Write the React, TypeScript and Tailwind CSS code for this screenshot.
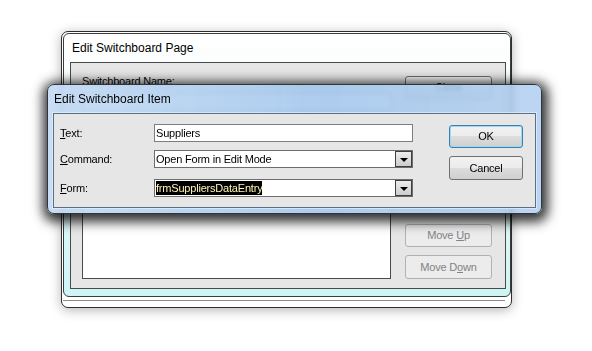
const win7Button =
  "flex items-center justify-center rounded-[3px] border bg-[linear-gradient(180deg,#f2f2f2_0%,#ebebeb_50%,#dddddd_50%,#cfcfcf_100%)]";

const disabledButton =
  "flex items-center justify-center rounded-[3px] border border-[#adb2b5] bg-[#ececec] text-[#838383]";

function Key({ k }: { k: string }) {
  return <span className="underline underline-offset-[1px]">{k}</span>;
}

function DropArrow() {
  return (
    <div className="flex h-full w-[17px] shrink-0 items-center justify-center border border-[#3f3f3f] bg-[linear-gradient(180deg,#ececec,#cdcdcd)]">
      <div className="mt-[2px] h-0 w-0 border-x-[4px] border-t-[4px] border-x-transparent border-t-black" />
    </div>
  );
}

function SwitchboardPage() {
  return (
    <div className="absolute left-[61px] top-[31px] flex h-[277px] w-[451px] flex-col rounded-[7px] border border-[#2e2e2e] bg-white pl-[1px] pt-[1px] shadow-[0_2px_12px_rgba(0,0,0,0.3)]">
      <div className="flex h-[264px] flex-col rounded-[6px] border border-[#3d3d3d] bg-[linear-gradient(180deg,#ffffff_0%,#f0fbfb_40%,#cdf5f5_100%)] pb-[7px] pl-[6px] pr-[4px]">
        <div className="flex h-[28px] items-center pl-[2px] text-[12px] tracking-normal">Edit Switchboard Page</div>
        <div className="flex flex-1 border border-[#4a4a4a] bg-[#e6e6e6] pb-[9px]">
          <div className="ml-[11px] flex w-[309px] flex-col">
            <div className="mt-[10px]">Switchboard Name:</div>
            <div className="mt-[3px] h-[18px] border border-[#7a7a7a] bg-white" />
            <div className="mt-[24px] flex-1 border border-[#4a4a4a] bg-white" />
          </div>
          <div className="ml-[14px] flex w-[87px] flex-col pt-[13px]">
            <div className={`${win7Button} h-[23px] border-[#707070]`}>Close</div>
            <div className="flex-1" />
            <div className={`${disabledButton} h-[23px]`}>
              <span>
                Move <Key k="U" />p
              </span>
            </div>
            <div className={`${disabledButton} mt-[8px] h-[24px]`}>
              <span>
                Move D<Key k="o" />wn
              </span>
            </div>
          </div>
        </div>
      </div>
      <div className="mr-[6px] mt-[3px] border-t border-[#8d8d8d]" />
    </div>
  );
}

function SwitchboardItem() {
  return (
    <div className="absolute left-[47px] top-[84px] flex h-[130px] w-[495px] flex-col overflow-hidden rounded-[7px] border border-[#2d3540] bg-[linear-gradient(90deg,rgba(196,219,244,0.92)_0%,rgba(162,198,236,0.88)_55%,rgba(176,206,240,0.86)_100%)] shadow-[1px_3px_12px_5px_rgba(0,0,0,0.8)] backdrop-blur-[2px]">
      <div className="flex h-[28px] shrink-0 items-center pl-[6px] text-[12px] tracking-normal">Edit Switchboard Item</div>
      <div className="mb-[5px] ml-[5px] mr-[5px] flex flex-1 border border-[#5a6e84] bg-[#e6e6e6] shadow-[0_0_0_1px_rgba(235,245,255,0.6)]">
        <div className="flex flex-col pl-[6px] pt-[10px]">
          <div className="flex h-[18px] items-center">
            <div className="w-[94px]">
              <Key k="T" />ext:
            </div>
            <div className="flex h-full w-[259px] items-center border border-[#7d7d7d] bg-white pl-[1px]">Suppliers</div>
          </div>
          <div className="mt-[8px] flex h-[18px] items-center">
            <div className="w-[94px]">
              <Key k="C" />ommand:
            </div>
            <div className="flex h-full w-[259px] items-center border border-[#6d6d6d] bg-white pl-[1px]">
              <div className="flex-1">Open Form in Edit Mode</div>
              <DropArrow />
            </div>
          </div>
          <div className="mt-[11px] flex h-[18px] items-center">
            <div className="w-[94px]">
              <Key k="F" />orm:
            </div>
            <div className="flex h-full w-[259px] items-center border border-[#6d6d6d] bg-white pl-[1px]">
              <div className="flex h-full flex-1 items-center py-[1px]">
                <span className="flex h-full items-center bg-black text-[#fff6b4]">frmSuppliersDataEntry</span>
              </div>
              <DropArrow />
            </div>
          </div>
        </div>
        <div className="ml-[36px] flex flex-col pt-[11px]">
          <div className={`${win7Button} h-[23px] w-[74px] border-[#3c7fb1] shadow-[inset_0_0_0_1px_#9fd7f5]`}>OK</div>
          <div className={`${win7Button} mt-[8px] h-[24px] w-[74px] border-[#707070]`}>Cancel</div>
        </div>
      </div>
    </div>
  );
}

export default function App() {
  return (
    <div className="relative h-[351px] w-[592px] overflow-hidden bg-white font-['Liberation_Sans',Arial,sans-serif] text-[11px] tracking-[-0.2px] text-black">
      <SwitchboardPage />
      <SwitchboardItem />
    </div>
  );
}
